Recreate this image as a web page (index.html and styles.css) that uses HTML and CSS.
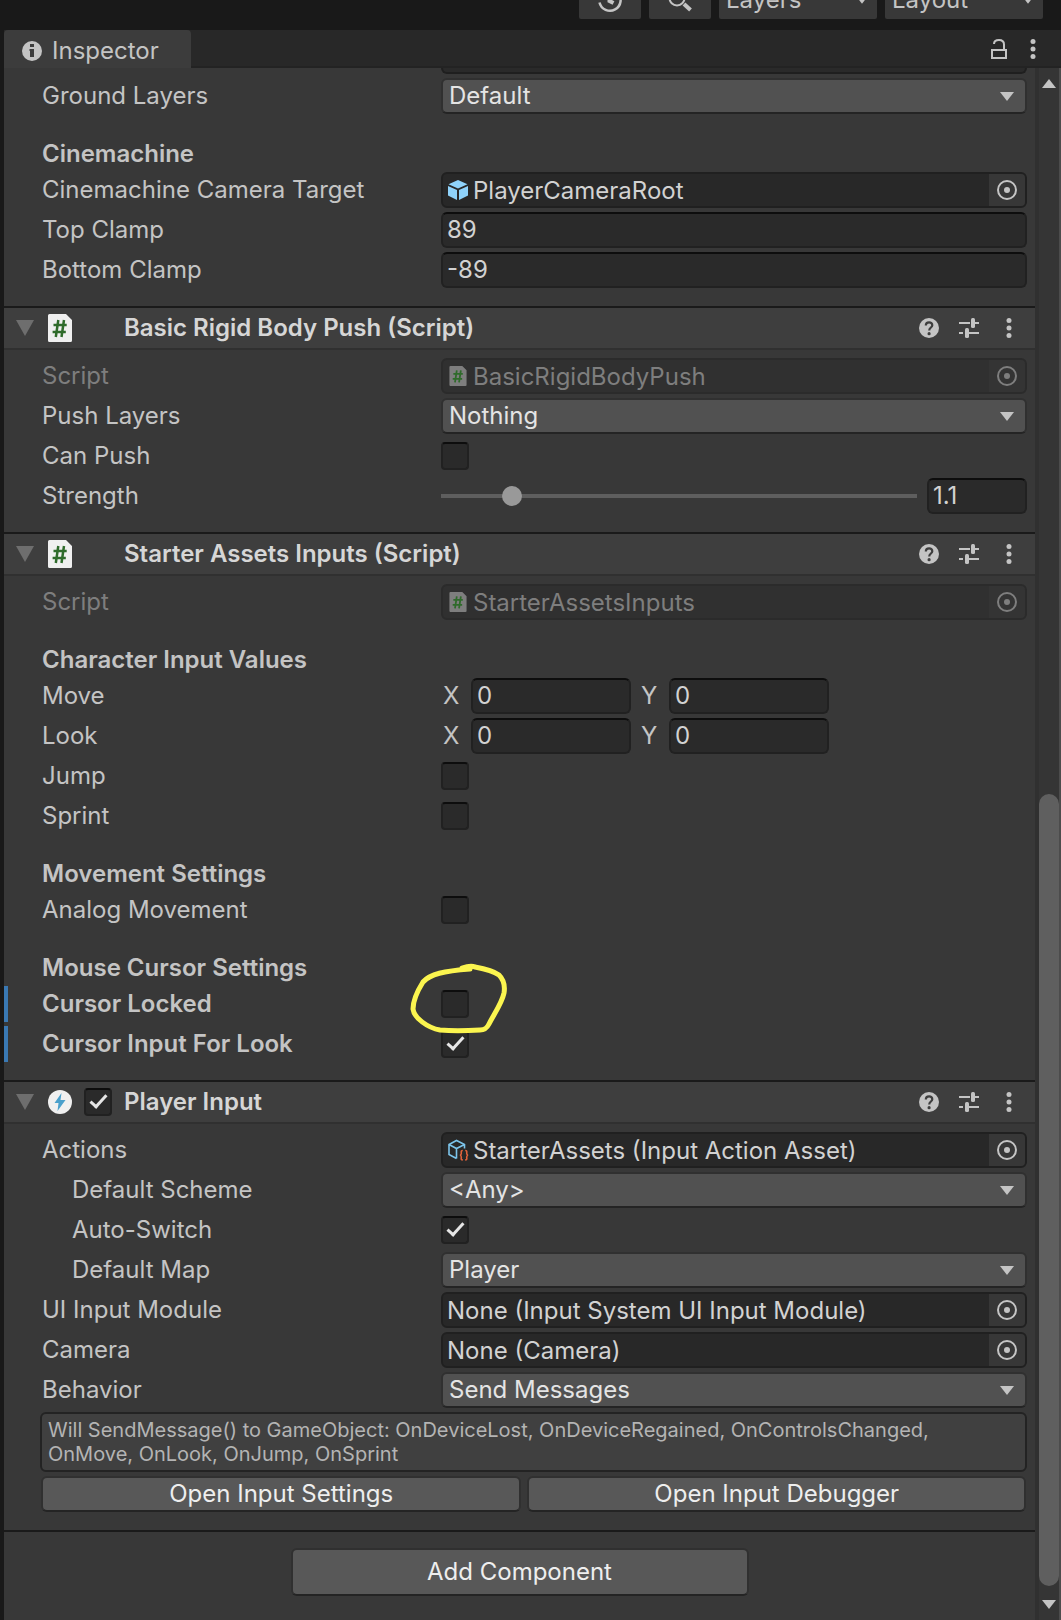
FILE: index.html
```html
<!DOCTYPE html>
<html lang="en">
<head>
<meta charset="utf-8">
<title>Inspector</title>
<link rel="stylesheet" href="styles.css">
</head>
<body>
<svg class="defs" aria-hidden="true">
  <symbol id="i-dots" viewBox="0 0 20 20"><circle cx="10" cy="2.500" r="2.500"/><circle cx="10" cy="10" r="2.500"/><circle cx="10" cy="17.500" r="2.500"/></symbol>
  <symbol id="i-help" viewBox="0 0 20 20"><circle cx="10" cy="10" r="10"/><path d="M6.800 7.600C6.800 5.400 8.200 4.300 10.100 4.300S13.300 5.500 13.300 7.200C13.300 9.500 10.300 9.600 10.200 12.500" fill="none" stroke="#3e3e3e" stroke-width="2.200"/><circle cx="10.100" cy="15.700" r="1.600" fill="#3e3e3e"/></symbol>
  <symbol id="i-preset" viewBox="0 0 20 20"><path d="M0 4h11v2H0zM16 4h4v2h-4zM0 14h4v2H0zM10 14h10v2H10z"/><rect x="12" y="0" width="4" height="10" rx="1.500"/><rect x="6" y="10" width="4" height="10" rx="1.500"/></symbol>
  <symbol id="i-pick" viewBox="0 0 20 20"><circle cx="10" cy="10" r="9" fill="none" stroke="currentColor" stroke-width="2"/><circle cx="10" cy="10" r="3"/></symbol>
  <symbol id="i-script" viewBox="0 0 24 28"><path d="M1.500 0H18l6 6v20.500a1.500 1.500 0 0 1-1.500 1.500h-21A1.500 1.500 0 0 1 0 26.500v-25A1.500 1.500 0 0 1 1.500 0z"/><path d="M10.300 6L7.800 23M16 6L13.500 23M5.500 11h13.200M4.600 18h13.200" fill="none" stroke="#2f6b2b" stroke-width="2.500"/></symbol>
  <symbol id="i-down" viewBox="0 0 14 9"><path d="M0 0h14L7 9z"/></symbol>
  <symbol id="i-fold" viewBox="0 0 18 16"><path d="M0 0h18L9 16z"/></symbol>
</svg>

<header class="toolbar">
  <button class="tool" type="button" aria-label="History"><svg width="26" height="26" viewBox="0 0 26 26" fill="none" stroke="currentColor" stroke-width="2.500"><path d="M2.500 15.500a10.700 10.700 0 1 0 1-7.500"/><path d="M12.500 6v8l4 2" stroke-width="4"/></svg></button>
  <button class="tool" type="button" aria-label="Search"><svg width="26" height="26" viewBox="0 0 26 26" fill="none" stroke="currentColor" stroke-width="2"><circle cx="10" cy="11" r="7.500"/><path d="M17 17l6.500 6" stroke-width="4"/></svg></button>
  <button class="tool tool-menu" type="button">Layers<svg class="caret" width="10" height="7"><use href="#i-down"/></svg></button>
  <button class="tool tool-menu" type="button">Layout<svg class="caret" width="10" height="7"><use href="#i-down"/></svg></button>
</header>

<main class="window">
  <div class="tabbar">
    <div class="tab"><svg width="20" height="20" viewBox="0 0 20 20"><circle cx="10" cy="10" r="10"/><path d="M8 3h4v3H8zM7.500 8H12v8H8V10h-.5z" fill="#3c3c3c"/></svg><h1>Inspector</h1></div>
    <div class="tab-actions">
      <button class="icon-btn" type="button" aria-label="Lock"><svg width="20" height="20" viewBox="0 0 20 20" fill="none" stroke="currentColor" stroke-width="2"><rect x="3" y="11" width="14" height="8"/><path d="M5 5C5 2.500 7 1 10 1s5 1.700 5 4.500V11"/></svg></button>
      <button class="icon-btn" type="button" aria-label="Menu"><svg width="20" height="20"><use href="#i-dots"/></svg></button>
    </div>
  </div>

  <div class="view">
    <div class="content">
      <section class="body body-first">
        <div class="row row-cut"><span></span><span class="box"></span></div>
        <div class="row"><label for="ground">Ground Layers</label><div class="drop"><select id="ground"><option>Default</option></select><svg width="14" height="9"><use href="#i-down"/></svg></div></div>
        <h2 class="group">Cinemachine</h2>
        <div class="row"><span class="label">Cinemachine Camera Target</span><div class="object"><svg class="obj-icon" width="20" height="20" viewBox="0 0 20 20"><path d="M10 0l9.500 4.300L10 8.600.5 4.300zM0 6l9 4v10l-9-4.400zM20 6l-9 4v10l9-4.400z" fill="#8fd3fb"/></svg><span class="obj-name">PlayerCameraRoot</span><button class="pick" type="button" aria-label="Select object"><svg width="20" height="20"><use href="#i-pick"/></svg></button></div></div>
        <div class="row"><label for="top">Top Clamp</label><input id="top" class="text" type="text" value="89"></div>
        <div class="row"><label for="bottom">Bottom Clamp</label><input id="bottom" class="text" type="text" value="-89"></div>
      </section>

      <section class="component">
        <div class="head"><svg class="fold" width="18" height="16"><use href="#i-fold"/></svg><svg class="kind" width="24" height="28"><use href="#i-script"/></svg><h2>Basic Rigid Body Push (Script)</h2><div class="head-actions"><button class="icon-btn" type="button" aria-label="Help"><svg width="20" height="20"><use href="#i-help"/></svg></button><button class="icon-btn" type="button" aria-label="Presets"><svg width="20" height="20"><use href="#i-preset"/></svg></button><button class="icon-btn" type="button" aria-label="Menu"><svg width="20" height="20"><use href="#i-dots"/></svg></button></div></div>
        <div class="body">
          <div class="row disabled"><span class="label">Script</span><div class="object"><svg class="obj-icon" width="20" height="20"><use href="#i-script"/></svg><span class="obj-name">BasicRigidBodyPush</span><button class="pick" type="button" aria-label="Select object" disabled><svg width="20" height="20"><use href="#i-pick"/></svg></button></div></div>
          <div class="row"><label for="push">Push Layers</label><div class="drop"><select id="push"><option>Nothing</option></select><svg width="14" height="9"><use href="#i-down"/></svg></div></div>
          <div class="row"><label for="canpush">Can Push</label><input id="canpush" class="check" type="checkbox"></div>
          <div class="row"><label for="strength">Strength</label><div class="slide"><input id="strength" class="range" type="range" min="0.5" max="5" step="0.1" value="1.1"><input class="text text-short" type="text" value="1.1" aria-label="Strength value"></div></div>
        </div>
      </section>

      <section class="component">
        <div class="head"><svg class="fold" width="18" height="16"><use href="#i-fold"/></svg><svg class="kind" width="24" height="28"><use href="#i-script"/></svg><h2>Starter Assets Inputs (Script)</h2><div class="head-actions"><button class="icon-btn" type="button" aria-label="Help"><svg width="20" height="20"><use href="#i-help"/></svg></button><button class="icon-btn" type="button" aria-label="Presets"><svg width="20" height="20"><use href="#i-preset"/></svg></button><button class="icon-btn" type="button" aria-label="Menu"><svg width="20" height="20"><use href="#i-dots"/></svg></button></div></div>
        <div class="body">
          <div class="row disabled"><span class="label">Script</span><div class="object"><svg class="obj-icon" width="20" height="20"><use href="#i-script"/></svg><span class="obj-name">StarterAssetsInputs</span><button class="pick" type="button" aria-label="Select object" disabled><svg width="20" height="20"><use href="#i-pick"/></svg></button></div></div>
          <h3 class="group">Character Input Values</h3>
          <div class="row"><span class="label">Move</span><div class="vector"><label for="mx">X</label><input id="mx" class="text" type="text" value="0"><label for="my">Y</label><input id="my" class="text" type="text" value="0"></div></div>
          <div class="row"><span class="label">Look</span><div class="vector"><label for="lx">X</label><input id="lx" class="text" type="text" value="0"><label for="ly">Y</label><input id="ly" class="text" type="text" value="0"></div></div>
          <div class="row"><label for="jump">Jump</label><input id="jump" class="check" type="checkbox"></div>
          <div class="row"><label for="sprint">Sprint</label><input id="sprint" class="check" type="checkbox"></div>
          <h3 class="group">Movement Settings</h3>
          <div class="row"><label for="analog">Analog Movement</label><input id="analog" class="check" type="checkbox"></div>
          <h3 class="group">Mouse Cursor Settings</h3>
          <div class="row changed"><label for="locked">Cursor Locked</label><div class="marked"><input id="locked" class="check" type="checkbox"><svg class="ring" width="104" height="80" viewBox="406 958 104 80" aria-hidden="true"><path d="M462 968C468 966 473 966 475 967C486 969 495 972 499 975C504 980 505 987 504 993C502 1003 494 1014 489 1024C487 1028 485 1030 480 1030C465 1031 450 1031 440 1030C428 1028 414 1018 413 1009C413 999 418 990 423 982C430 974 444 971 470 969"/></svg></div></div>
          <div class="row changed"><label for="forlook">Cursor Input For Look</label><input id="forlook" class="check" type="checkbox" checked></div>
        </div>
      </section>

      <section class="component">
        <div class="head"><svg class="fold" width="18" height="16"><use href="#i-fold"/></svg><svg class="kind" width="24" height="24" viewBox="0 0 24 24"><circle cx="12" cy="12" r="12"/><path d="M13.500 3L6.500 13h4l-1 8 8-11h-5z" fill="#4aa0cc"/></svg><input class="check" type="checkbox" checked aria-label="Enable Player Input"><h2>Player Input</h2><div class="head-actions"><button class="icon-btn" type="button" aria-label="Help"><svg width="20" height="20"><use href="#i-help"/></svg></button><button class="icon-btn" type="button" aria-label="Presets"><svg width="20" height="20"><use href="#i-preset"/></svg></button><button class="icon-btn" type="button" aria-label="Menu"><svg width="20" height="20"><use href="#i-dots"/></svg></button></div></div>
        <div class="body">
          <div class="row"><span class="label">Actions</span><div class="object"><svg class="obj-icon" width="22" height="22" viewBox="0 0 22 22" fill="none" stroke="#7cc4ea" stroke-width="1.600"><path d="M9.500 19.500L2 15.500V5.500L9.500 1.500l8 4v4M2 5.500l7.500 4 8-4M9.500 9.500v10"/><path d="M15.800 11.500c-2.200 0-1.500 1.300-1.500 2.800 0 1.200-.4 1.700-1.300 1.900.9.200 1.300.7 1.300 1.900 0 1.500-.7 2.800 1.500 2.800M18.200 11.500c2.200 0 1.500 1.300 1.500 2.800 0 1.200.4 1.700 1.300 1.900-.9.200-1.300.7-1.300 1.900 0 1.500.7 2.800-1.500 2.800" stroke="#e0623a"/></svg><span class="obj-name">StarterAssets (Input Action Asset)</span><button class="pick" type="button" aria-label="Select object"><svg width="20" height="20"><use href="#i-pick"/></svg></button></div></div>
          <div class="row indent"><label for="scheme">Default Scheme</label><div class="drop"><select id="scheme"><option>&lt;Any&gt;</option></select><svg width="14" height="9"><use href="#i-down"/></svg></div></div>
          <div class="row indent"><label for="auto">Auto-Switch</label><input id="auto" class="check" type="checkbox" checked></div>
          <div class="row indent"><label for="map">Default Map</label><div class="drop"><select id="map"><option>Player</option></select><svg width="14" height="9"><use href="#i-down"/></svg></div></div>
          <div class="row"><span class="label">UI Input Module</span><div class="object"><span class="obj-name">None (Input System UI Input Module)</span><button class="pick" type="button" aria-label="Select object"><svg width="20" height="20"><use href="#i-pick"/></svg></button></div></div>
          <div class="row"><span class="label">Camera</span><div class="object"><span class="obj-name">None (Camera)</span><button class="pick" type="button" aria-label="Select object"><svg width="20" height="20"><use href="#i-pick"/></svg></button></div></div>
          <div class="row"><label for="behavior">Behavior</label><div class="drop"><select id="behavior"><option>Send Messages</option></select><svg width="14" height="9"><use href="#i-down"/></svg></div></div>
          <p class="help">Will SendMessage() to GameObject: OnDeviceLost, OnDeviceRegained, OnControlsChanged, OnMove, OnLook, OnJump, OnSprint</p>
          <div class="buttons"><button class="btn" type="button">Open Input Settings</button><button class="btn" type="button">Open Input Debugger</button></div>
        </div>
      </section>

      <footer class="footer"><button class="btn btn-add" type="button">Add Component</button></footer>
    </div>

    <div class="scroll" aria-hidden="true"><svg width="14" height="9" viewBox="0 0 14 9"><path d="M7 0l7 9H0z"/></svg><div class="track"><div class="thumb"></div></div><svg width="14" height="9"><use href="#i-down"/></svg></div>
  </div>
</main>
</body>
</html>
```
FILE: styles.css
```css
* { box-sizing: border-box; }

body {
  margin: 0;
  background: #191919;
  color: #c4c4c4;
  font: 24px/36px Inter, "Liberation Sans", sans-serif;
}

h1, h2, h3, p { margin: 0; font: inherit; }
button, input, select { margin: 0; font: inherit; color: inherit; }
button { border: 0; padding: 0; background: none; }
svg { display: block; flex: none; }
svg:not([fill]) { fill: currentColor; }
.defs { position: absolute; width: 0; height: 0; }

.toolbar {
  display: flex;
  justify-content: flex-end;
  align-items: flex-end;
  gap: 8px;
  height: 30px;
  padding: 0 18px 11px 0;
  overflow: hidden;
}
.tool {
  display: flex;
  flex: none;
  align-items: center;
  justify-content: center;
  width: 62px;
  height: 38px;
  border-radius: 2px;
  background: #383838;
}
.tool-menu { justify-content: space-between; width: 158px; padding: 0 10px 0 7px; }

/* Window and its tab bar */
.window {
  display: flex;
  flex-direction: column;
  min-height: calc(100vh - 30px);
  padding-left: 4px;
}
.tabbar {
  display: flex;
  justify-content: space-between;
  height: 38px;
  background: #282828;
  box-shadow: inset 0 -2px #232323;
}
.tab {
  display: flex;
  align-items: center;
  gap: 10px;
  padding: 3px 32px 0 18px;
  border-radius: 4px 4px 0 0;
  background: #3c3c3c;
}
.tab-actions { display: flex; align-items: center; gap: 14px; padding-right: 18px; }
.icon-btn { width: 20px; height: 20px; }

.view { display: flex; flex: 1; background: #383838; border-right: 2px solid #4c4c4c; }
.content { flex: 1; min-width: 0; }

/* Property rows */
.body { display: flex; flex-direction: column; gap: 4px; padding: 8px 8px 18px 0; }
.body-first { padding-top: 0; }
.row {
  display: grid;
  grid-template-columns: 399px minmax(0, 1fr);
  align-items: center;
  height: 36px;
  padding-left: 38px;
}
.indent > label { padding-left: 30px; }
.row-cut { height: 6px; }
.box { height: 6px; border: 2px solid #1f1f1f; border-top: 0; border-radius: 0 0 6px 6px; background: #2a2a2a; }
.group { height: 36px; margin: 18px 0 -4px; padding-left: 38px; font-weight: 600; }
.changed { box-shadow: inset 4px 0 #3a79b4; font-weight: 600; }

.text {
  width: 100%;
  min-width: 0;
  height: 36px;
  padding: 0 4px;
  border: 2px solid #212121;
  border-top-color: #0d0d0d;
  border-radius: 6px;
  background: #2a2a2a;
  color: #d2d2d2;
}
.drop { position: relative; }
.drop select {
  display: block;
  width: 100%;
  height: 36px;
  padding: 0 40px 0 6px;
  border: 2px solid #303030;
  border-bottom-color: #242424;
  border-radius: 6px;
  background: #515151;
  color: #e4e4e4;
  line-height: 32px;
  appearance: none;
}
.drop svg { position: absolute; right: 13px; top: 14px; pointer-events: none; }

.object {
  display: flex;
  align-items: center;
  height: 36px;
  padding-left: 4px;
  border: 2px solid #202020;
  border-radius: 6px;
  background: #282828;
  color: #d2d2d2;
  overflow: hidden;
}
.obj-icon { width: 22px; margin-right: 4px; }
.obj-name { flex: 1; min-width: 0; white-space: nowrap; padding-top: 2px; }
.pick { display: flex; align-items: center; justify-content: center; width: 36px; height: 32px; background: #373737; color: #c4c4c4; }
.disabled { color: #7e7e7e; }
.disabled .object { border-color: #2b2b2b; background: #303030; color: #7e7e7e; }
.disabled .pick { background: #343434; color: #7e7e7e; }

.check {
  display: block;
  width: 28px;
  height: 28px;
  border: 2px solid #212121;
  border-top-color: #0d0d0d;
  border-radius: 4px;
  background: #2a2a2a;
  appearance: none;
}
.check:checked::before {
  content: "";
  display: block;
  box-sizing: border-box;
  width: 17px;
  height: 9px;
  margin: 5px 0 0 4px;
  border: solid #e6e6e6;
  border-width: 0 0 3px 3px;
  transform: rotate(-48deg);
}

.slide { display: flex; align-items: center; gap: 10px; }
.range { flex: 1; min-width: 0; height: 20px; background: none; appearance: none; }
.range::-webkit-slider-runnable-track { height: 4px; background: #5e5e5e; }
.range::-webkit-slider-thumb { width: 20px; height: 20px; margin-top: -8px; border-radius: 50%; background: #999; appearance: none; }
.text-short { width: 100px; }

.vector { display: flex; align-items: center; }
.vector label { width: 30px; padding-left: 2px; }
.vector .text { width: 160px; margin-right: 8px; }

/* Hand-drawn highlight over the checkbox */
.marked { position: relative; }
.ring { position: absolute; left: -35px; top: -32px; stroke: #fbf54f; stroke-width: 5; stroke-linecap: round; stroke-linejoin: round; z-index: 1; }
.ring path { fill: none; }

/* Component headers */
.component { border-top: 2px solid #1a1a1a; }
.head {
  display: flex;
  align-items: center;
  height: 42px;
  padding: 0 16px 0 12px;
  border-bottom: 2px solid #303030;
  background: #3e3e3e;
}
.fold { color: #6e6e6e; }
.kind { margin-left: 14px; color: #f0f0f0; }
.head .check { margin-left: 12px; }
.head h2 { flex: 1; margin-left: 52px; color: #d6d6d6; font-weight: 600; }
.head .check + h2 { margin-left: 12px; }
.head-actions { display: flex; gap: 20px; }

.help {
  margin-left: 36px;
  padding: 4px 6px;
  border: 2px solid #232323;
  border-radius: 6px;
  background: #404040;
  color: #b4b4b4;
  font-size: 20px;
  line-height: 24px;
}
.buttons { display: grid; grid-template-columns: 480fr 498fr; gap: 6px; padding: 0 1px 0 37px; }
.btn {
  height: 36px;
  border: 2px solid #303030;
  border-bottom-color: #242424;
  border-radius: 6px;
  background: #585858;
  color: #eee;
  line-height: 30px;
}
.footer { display: flex; justify-content: center; padding: 16px 0 24px; border-top: 2px solid #1a1a1a; }
.btn-add { width: 458px; height: 48px; }

/* Scrollbar */
.scroll {
  display: flex;
  flex-direction: column;
  align-items: center;
  width: 24px;
  padding: 11px 0;
  border-left: 4px solid #303030;
  background: #353535;
}
.track { display: flex; flex: 1; flex-direction: column; justify-content: flex-end; width: 20px; padding: 4px 0 14px; }
.thumb { height: 53%; border-radius: 10px; background: #5f5f5f; }
```
